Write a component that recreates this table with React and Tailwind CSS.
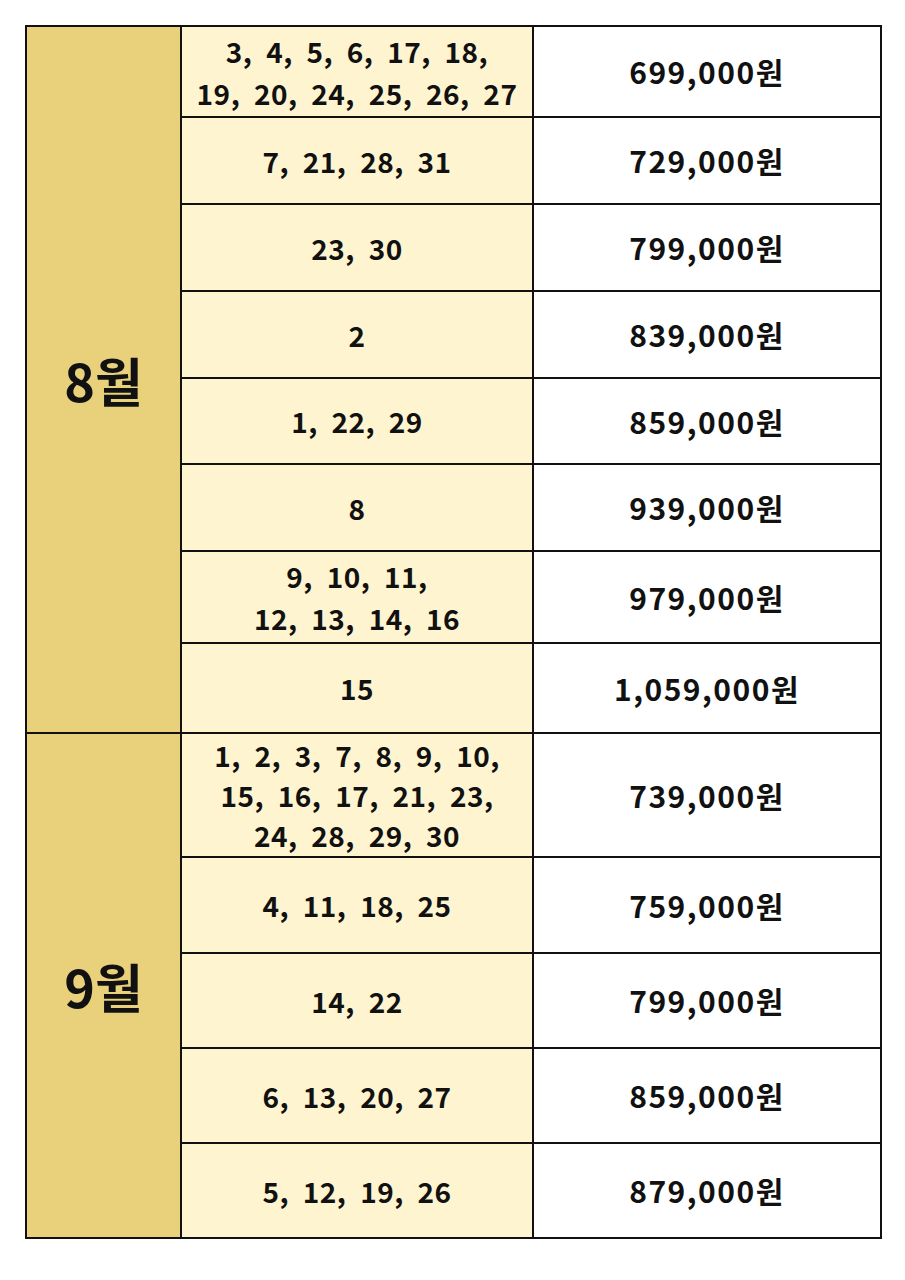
const august = [
  { days: ['3,  4,  5,  6,  17,  18,', '19,  20,  24,  25,  26,  27'], price: '699,000원', h: 91 },
  { days: ['7,  21,  28,  31'], price: '729,000원', h: 87 },
  { days: ['23,  30'], price: '799,000원', h: 87 },
  { days: ['2'], price: '839,000원', h: 87 },
  { days: ['1,  22,  29'], price: '859,000원', h: 86 },
  { days: ['8'], price: '939,000원', h: 87 },
  { days: ['9,  10,  11,', '12,  13,  14,  16'], price: '979,000원', h: 92 },
  { days: ['15'], price: '1,059,000원', h: 90 },
];

const september = [
  { days: ['1,  2,  3,  7,  8,  9,  10,', '15,  16,  17,  21,  23,', '24,  28,  29,  30'], price: '739,000원', h: 124 },
  { days: ['4,  11,  18,  25'], price: '759,000원', h: 96 },
  { days: ['14,  22'], price: '799,000원', h: 95 },
  { days: ['6,  13,  20,  27'], price: '859,000원', h: 95 },
  { days: ['5,  12,  19,  26'], price: '879,000원', h: 95 },
];

function MonthRows({ label, rows }) {
  return rows.map((r, i) => (
    <tr key={i} style={{ height: r.h }}>
      {i === 0 && (
        <td
          rowSpan={rows.length}
          className="border-2 border-[#111] bg-[#e9d07a] text-center align-middle text-[52px] font-bold"
        >
          {label}
        </td>
      )}
      <td
        className={`border-2 border-[#111] bg-[#fef5d0] text-center align-middle text-[28px] font-bold tracking-[0.5px] whitespace-pre ${
          r.days.length > 2 ? 'leading-[40px]' : 'leading-[42px]'
        }`}
      >
        {r.days.map((d, j) => (
          <div key={j}>{d}</div>
        ))}
      </td>
      <td className="border-2 border-[#111] bg-white text-center align-middle text-[30px] font-bold tracking-[1.5px]">
        {r.price}
      </td>
    </tr>
  ));
}

export default function App() {
  return (
    <div
      className="w-[905px] h-[1280px] bg-white pt-[25px] pl-[25px] text-[#111]"
      style={{ fontFamily: '"Noto Sans CJK KR", "Noto Sans", sans-serif' }}
    >
      <table className="border-collapse table-fixed w-[855px]">
        <colgroup>
          <col className="w-[155px]" />
          <col className="w-[352px]" />
          <col className="w-[348px]" />
        </colgroup>
        <tbody>
          <MonthRows label="8월" rows={august} />
          <MonthRows label="9월" rows={september} />
        </tbody>
      </table>
    </div>
  );
}
